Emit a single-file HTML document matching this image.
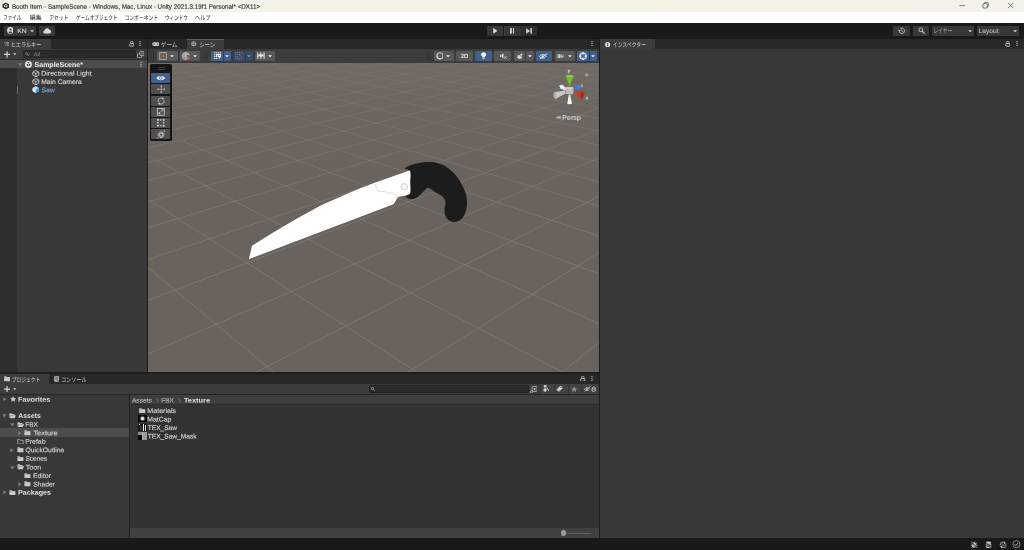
<!DOCTYPE html>
<html lang="ja">
<head>
<meta charset="utf-8">
<title>Booth Item - SampleScene - Unity</title>
<style>
*{box-sizing:border-box;margin:0;padding:0}
html,body{width:1024px;height:550px;overflow:hidden;background:#383838}
body{font-family:"Liberation Sans","Noto Sans CJK JP",sans-serif;font-size:6.4px;color:#d2d2d2;line-height:1}
#root{position:absolute;left:0;top:0;width:1024px;height:550px;will-change:transform;overflow:hidden}
.a{position:absolute}
.t{position:absolute;white-space:nowrap;line-height:1;transform-origin:0 50%}
</style>
</head>
<body>
<div id="root">
<div class="a" style="left:0.00px;top:0.00px;width:1024.00px;height:11.70px;background:linear-gradient(to right,#f3f3ec 0%,#f4f2e8 35%,#f5f2e5 62%,#f3f2e9 85%,#f2f2ec 100%);"></div>
<svg class="a" style="left:1.60px;top:2.00px" width="7.60" height="7.80" viewBox="0 0 16 15"><path d="M8 0.3 L14.9 3.9 V11.1 L8 14.7 L1.1 11.1 V3.9 Z" fill="#2b2b2b"/><path d="M8 3 L10.6 4.4 L8 5.9 L5.4 4.4 Z M4.3 5.6 L7.3 7.3 V10.9 L4.3 9.2 Z M11.7 5.6 V9.2 L8.7 10.9 V7.3 Z" fill="#e8e8e0"/></svg>
<span class="t" style="left:11px;top:3px;font-size:6.5px;color:#2e2e2e;-webkit-text-stroke:0.14px #2e2e2e;transform:translate(0.92px,0.71px) rotate(0.03deg) scaleX(0.9672);">Booth Item - SampleScene - Windows, Mac, Linux - Unity 2021.3.19f1 Personal* &lt;DX11&gt;</span>
<svg class="a" style="left:955.00px;top:0.00px" width="69.00" height="11.00" viewBox="0 0 69 11"><g stroke="#2a2a2a" stroke-width="0.6" fill="none"><path d="M4.3 5.6 H10"/><rect x="27.9" y="3.7" width="4.3" height="4.3" rx="0.9"/><path d="M29.1 3.7 V3.3 Q29.1 2.6 29.8 2.6 H32.6 Q33.3 2.6 33.3 3.3 V6.2 Q33.3 6.9 32.6 6.9 H32.2"/><path d="M53.1 2.9 L58.3 8.1 M58.3 2.9 L53.1 8.1"/></g></svg>
<div class="a" style="left:0.00px;top:11.70px;width:1024.00px;height:11.20px;background:#ffffff;"></div>
<span class="t" style="left:3px;top:14px;font-size:6.3px;color:#262626;transform:translate(0.37px,0.73px) rotate(0.03deg) scaleX(0.7052);">ファイル</span>
<span class="t" style="left:29px;top:14px;font-size:6.3px;color:#262626;transform:translate(0.80px,0.73px) rotate(0.03deg) scaleX(0.9360);">編集</span>
<span class="t" style="left:49px;top:14px;font-size:6.3px;color:#262626;transform:translate(0.23px,0.73px) rotate(0.03deg) scaleX(0.7656);">アセット</span>
<span class="t" style="left:75px;top:14px;font-size:6.3px;color:#262626;transform:translate(0.92px,0.73px) rotate(0.03deg) scaleX(0.7367);">ゲームオブジェクト</span>
<span class="t" style="left:124px;top:14px;font-size:6.3px;color:#262626;transform:translate(0.44px,0.73px) rotate(0.03deg) scaleX(0.7645);">コンポーネント</span>
<span class="t" style="left:164px;top:14px;font-size:6.3px;color:#262626;transform:translate(0.95px,0.73px) rotate(0.03deg) scaleX(0.7300);">ウィンドウ</span>
<span class="t" style="left:194px;top:14px;font-size:6.3px;color:#262626;transform:translate(0.99px,0.73px) rotate(0.03deg) scaleX(0.8216);">ヘルプ</span>
<div class="a" style="left:0.00px;top:22.90px;width:1024.00px;height:16.10px;background:#191919;"></div>
<div class="a" style="left:4.10px;top:26.00px;width:31.80px;height:9.70px;background:#383838;border-radius:1px;"></div>
<svg class="a" style="left:6.50px;top:27.40px" width="6.90" height="6.90" viewBox="0 0 14 14"><circle cx="7" cy="7" r="6.8" fill="#d8d8d8"/><circle cx="7" cy="5.2" r="2.1" fill="#383838"/><path d="M3.2 11.2 C3.8 8.6 10.2 8.6 10.8 11.2 C9.2 13 4.8 13 3.2 11.2Z" fill="#383838"/></svg>
<span class="t" style="left:17px;top:28px;font-size:6.2px;color:#cfcfcf;-webkit-text-stroke:0.14px #cfcfcf;transform:translate(0.26px,0.11px) rotate(0.03deg) scaleX(1.0839);">KN</span>
<svg class="a" style="left:29.90px;top:29.90px" width="4.20" height="2.40" viewBox="0 0 10 6"><path d="M0.3 0.4 H9.7 L5 5.8Z" fill="#d4d4d4"/></svg>
<div class="a" style="left:38.90px;top:26.00px;width:16.60px;height:9.70px;background:#383838;border-radius:1px;"></div>
<svg class="a" style="left:42.70px;top:28.10px" width="8.60" height="5.70" viewBox="0 0 19 13"><path d="M4.6 12.6 C1.6 12.6 0.3 10.6 0.3 9 C0.3 7 1.9 5.7 3.6 5.6 C3.9 2.6 6.3 0.4 9.2 0.4 C11.7 0.4 13.7 2 14.5 4.2 C16.9 4.4 18.7 6.1 18.7 8.4 C18.7 10.8 16.8 12.6 14.4 12.6 Z" fill="#dadada"/></svg>
<div class="a" style="left:486.80px;top:26.00px;width:16.40px;height:9.70px;background:#383838;border-radius:1px 0 0 1px;"></div>
<div class="a" style="left:503.50px;top:26.00px;width:16.50px;height:9.70px;background:#383838;border-radius:0;"></div>
<div class="a" style="left:520.40px;top:26.00px;width:16.60px;height:9.70px;background:#2e2e2e;border-radius:0 1px 1px 0;"></div>
<svg class="a" style="left:492.60px;top:28.10px" width="4.80" height="5.80" viewBox="0 0 10 12"><path d="M0.4 0.2 L9.8 6 L0.4 11.8Z" fill="#dcdcdc"/></svg>
<svg class="a" style="left:509.60px;top:28.10px" width="4.80" height="5.80" viewBox="0 0 10 12"><rect x="0.2" y="0.2" width="3.6" height="11.6" fill="#dcdcdc"/><rect x="6.2" y="0.2" width="3.6" height="11.6" fill="#dcdcdc"/></svg>
<svg class="a" style="left:526.00px;top:28.10px" width="6.20" height="5.80" viewBox="0 0 13 12"><path d="M0.4 0.2 L8.6 6 L0.4 11.8Z" fill="#d0d0d0"/><rect x="9.2" y="0.2" width="3.2" height="11.6" fill="#d0d0d0"/></svg>
<div class="a" style="left:893.30px;top:26.00px;width:16.70px;height:9.70px;background:#383838;border-radius:1px;"></div>
<svg class="a" style="left:897.80px;top:27.00px" width="7.60" height="7.60" viewBox="0 0 14 14"><path d="M2.3 7.2 A4.9 4.9 0 1 0 3.9 3.4" fill="none" stroke="#d0d0d0" stroke-width="1.5"/><path d="M0.3 5.2 L4.6 5.6 L2.3 8.9Z" fill="#d0d0d0"/><path d="M7.2 4.2 V7.4 L9.5 8.7" fill="none" stroke="#d0d0d0" stroke-width="1.3"/></svg>
<div class="a" style="left:913.10px;top:26.00px;width:16.10px;height:9.70px;background:#383838;border-radius:1px;"></div>
<svg class="a" style="left:917.60px;top:27.30px" width="7.20" height="7.20" viewBox="0 0 14 14"><circle cx="5.4" cy="5.4" r="3.7" fill="none" stroke="#d0d0d0" stroke-width="1.7"/><path d="M8.2 8.2 L13 13" stroke="#d0d0d0" stroke-width="2.1"/></svg>
<div class="a" style="left:932.10px;top:26.00px;width:41.90px;height:9.70px;background:#383838;border-radius:1px;"></div>
<span class="t" style="left:933px;top:28px;font-size:6.2px;color:#a8a8a8;transform:translate(0.34px,0.01px) rotate(0.03deg) scaleX(0.7648);">レイヤー</span>
<svg class="a" style="left:967.90px;top:29.90px" width="4.40" height="2.50" viewBox="0 0 10 6"><path d="M0.3 0.4 H9.7 L5 5.8Z" fill="#d4d4d4"/></svg>
<div class="a" style="left:977.00px;top:26.00px;width:42.10px;height:9.70px;background:#383838;border-radius:1px;"></div>
<span class="t" style="left:978px;top:28px;font-size:6.3px;color:#b0b0b0;-webkit-text-stroke:0.14px #b0b0b0;transform:translate(0.46px,0.03px) rotate(0.03deg) scaleX(1.0703);">Layout</span>
<svg class="a" style="left:1012.90px;top:29.90px" width="4.40" height="2.50" viewBox="0 0 10 6"><path d="M0.3 0.4 H9.7 L5 5.8Z" fill="#d4d4d4"/></svg>
<div class="a" style="left:0.00px;top:38.70px;width:147.00px;height:10.00px;background:#282828;"></div>
<div class="a" style="left:0.00px;top:38.70px;width:50.80px;height:10.00px;background:#3c3c3c;"></div>
<svg class="a" style="left:4.30px;top:42.20px" width="5.00" height="3.80" viewBox="0 0 10 8"><g stroke="#c0c0c0" stroke-width="1.5"><path d="M0 1H2.2M3.4 1H10M2.6 4H4.8M6 4H10M2.6 7H4.8M6 7H10"/></g></svg>
<span class="t" style="left:10px;top:41px;font-size:6.2px;color:#d0d0d0;transform:translate(0.67px,0.76px) rotate(0.03deg) scaleX(0.8254);">ヒエラルキー</span>
<svg class="a" style="left:128.60px;top:41.20px" width="5.40" height="5.60" viewBox="0 0 11 12"><rect x="1.1" y="5.5" width="8.8" height="5.6" rx="1.6" fill="none" stroke="#cacaca" stroke-width="2"/><path d="M2.5 3.9 Q2.5 0.9 5.5 0.9 Q8.6 0.9 8.6 3.8 V5.4" fill="none" stroke="#cacaca" stroke-width="1.7"/></svg>
<svg class="a" style="left:139.30px;top:41.00px" width="1.90" height="5.40" viewBox="0 0 4 12"><g fill="#c6c6c6"><rect x="0.8" y="0.2" width="2.6" height="2.6"/><rect x="0.8" y="4.7" width="2.6" height="2.6"/><rect x="0.8" y="9.2" width="2.6" height="2.6"/></g></svg>
<div class="a" style="left:0.00px;top:48.70px;width:147.00px;height:10.60px;background:#3c3c3c;"></div>
<div class="a" style="left:0.00px;top:59.20px;width:147.00px;height:0.80px;background:#2a2a2a;"></div>
<svg class="a" style="left:3.90px;top:51.00px" width="6.20" height="6.80" viewBox="0 0 12 13"><path d="M6 0.2V12.8M0.2 6.5H11.8" stroke="#dcdcdc" stroke-width="2.1"/></svg>
<svg class="a" style="left:12.70px;top:53.40px" width="3.60" height="2.30" viewBox="0 0 10 6"><path d="M0.3 0.4 H9.7 L5 5.8Z" fill="#cfcfcf"/></svg>
<div class="a" style="left:23.30px;top:50.20px;width:113.20px;height:8.20px;background:#2a2a2a;border:0.6px solid #242424;border-radius:1.6px;"></div>
<svg class="a" style="left:25.00px;top:52.00px" width="5.40" height="5.00" viewBox="0 0 11 10"><circle cx="3.6" cy="3.6" r="2.5" fill="none" stroke="#858585" stroke-width="1.5"/><path d="M5.4 5.4 L8.4 8.4" stroke="#858585" stroke-width="1.7"/><path d="M7.6 3.2 H10.8 L9.2 5.2Z" fill="#858585"/></svg>
<span class="t" style="left:33px;top:52px;font-size:5.6px;color:#767676;-webkit-text-stroke:0.14px #767676;transform:translate(0.40px,0.23px) rotate(0.03deg) scaleX(1.1000);">All</span>
<svg class="a" style="left:136.90px;top:51.00px" width="7.60" height="7.40" viewBox="0 0 15 15"><rect x="0.9" y="5.4" width="8.4" height="8.4" rx="2" fill="none" stroke="#c4c4c4" stroke-width="1.5"/><rect x="5.4" y="0.9" width="8.6" height="8.6" rx="2.2" fill="#3c3c3c" stroke="#c4c4c4" stroke-width="1.5"/><path d="M9.7 3 V6.6 M8 5.2 L9.7 7 L11.4 5.2" fill="none" stroke="#c4c4c4" stroke-width="1.2"/></svg>
<div class="a" style="left:0.00px;top:60.00px;width:147.00px;height:312.00px;background:#383838;"></div>
<div class="a" style="left:0.00px;top:60.00px;width:16.90px;height:312.00px;background:#2d2d2d;"></div>
<div class="a" style="left:0.00px;top:59.95px;width:147.00px;height:7.80px;background:#4d4d4d;"></div>
<svg class="a" style="left:17.90px;top:63.00px" width="4.50" height="3.60" viewBox="0 0 10 8"><path d="M0.2 0.4 H9.8 L5 7.8Z" fill="#7c7c7c"/></svg>
<svg class="a" style="left:25.30px;top:60.90px" width="6.90" height="6.90" viewBox="0 0 14 14"><circle cx="7" cy="7" r="6.9" fill="#f0f0f0"/><path d="M7 2.2 L9.6 3.7 L7 5.2 L4.4 3.7Z M3.4 5.3 L6.3 7 V10.6 L3.4 8.9Z M10.6 5.3 V8.9 L7.7 10.6 V7Z" fill="#2c2c2c"/></svg>
<span class="t" style="left:34px;top:62px;font-size:6.9px;color:#ececec;font-weight:bold;transform:translate(0.55px,0.05px) rotate(0.03deg) scaleX(1.0180);">SampleScene*</span>
<svg class="a" style="left:139.90px;top:62.00px" width="1.90" height="5.40" viewBox="0 0 4 12"><g fill="#c6c6c6"><rect x="0.8" y="0.2" width="2.6" height="2.6"/><rect x="0.8" y="4.7" width="2.6" height="2.6"/><rect x="0.8" y="9.2" width="2.6" height="2.6"/></g></svg>
<svg class="a" style="left:32.10px;top:69.60px" width="7.70" height="7.30" viewBox="0 0 16 16"><path d="M8 1 L14 4.2 Q14.6 4.6 14.6 5.2 V10.8 Q14.6 11.4 14 11.8 L8 15 L2 11.8 Q1.4 11.4 1.4 10.8 V5.2 Q1.4 4.6 2 4.2 Z" fill="none" stroke="#cfcfcf" stroke-width="2"/><path d="M2 4.8 L8 8 L14 4.8 M8 8 V14.6" fill="none" stroke="#cfcfcf" stroke-width="2"/></svg>
<span class="t" style="left:41px;top:70px;font-size:6.7px;color:#d4d4d4;-webkit-text-stroke:0.14px #d4d4d4;transform:translate(0.17px,0.60px) rotate(0.03deg) scaleX(1.0547);">Directional Light</span>
<svg class="a" style="left:32.10px;top:78.00px" width="7.70" height="7.30" viewBox="0 0 16 16"><path d="M8 1 L14 4.2 Q14.6 4.6 14.6 5.2 V10.8 Q14.6 11.4 14 11.8 L8 15 L2 11.8 Q1.4 11.4 1.4 10.8 V5.2 Q1.4 4.6 2 4.2 Z" fill="none" stroke="#cfcfcf" stroke-width="2"/><path d="M2 4.8 L8 8 L14 4.8 M8 8 V14.6" fill="none" stroke="#cfcfcf" stroke-width="2"/></svg>
<span class="t" style="left:41px;top:79px;font-size:6.7px;color:#d4d4d4;-webkit-text-stroke:0.14px #d4d4d4;transform:translate(0.19px,0.10px) rotate(0.03deg) scaleX(1.0113);">Main Camera</span>
<div class="a" style="left:16.90px;top:85.70px;width:1.20px;height:8.40px;background:#2f80c6;"></div>
<svg class="a" style="left:32.20px;top:86.40px" width="7.50" height="7.30" viewBox="0 0 16 16"><path d="M8 0.6 L14.8 4.4 V11.6 L8 15.4 L1.2 11.6 V4.4 Z" fill="#6fb1ea"/><path d="M8 0.6 L14.8 4.4 L8 8.2 L1.2 4.4Z" fill="#bfdcf5"/><path d="M8 8.2 V15.4 L1.2 11.6 V4.4Z" fill="#eef6fc"/><path d="M8 8.2 V15.4 L14.8 11.6 V4.4Z" fill="#4f96d8"/></svg>
<span class="t" style="left:41px;top:87px;font-size:6.7px;color:#7ba1d4;-webkit-text-stroke:0.14px #7ba1d4;transform:translate(0.44px,0.15px) rotate(0.03deg) scaleX(1.0275);">Saw</span>
<div class="a" style="left:146.90px;top:38.70px;width:1.60px;height:334.00px;background:#1d1d1d;"></div>
<div class="a" style="left:148.30px;top:38.70px;width:450.60px;height:10.00px;background:#282828;"></div>
<svg class="a" style="left:151.80px;top:42.30px" width="7.70" height="4.20" viewBox="0 0 16 9"><rect x="0.2" y="0.4" width="15.6" height="8.2" rx="4.1" fill="#cdcdcd"/><circle cx="4.5" cy="4.5" r="1.35" fill="#282828"/><circle cx="11.5" cy="4.5" r="1.35" fill="#282828"/></svg>
<span class="t" style="left:160px;top:41px;font-size:6.2px;color:#cacaca;transform:translate(0.77px,0.76px) rotate(0.03deg) scaleX(0.9070);">ゲーム</span>
<div class="a" style="left:187.00px;top:38.70px;width:37.00px;height:10.00px;background:#3c3c3c;"></div>
<div class="a" style="left:187.00px;top:38.60px;width:37.00px;height:1.00px;background:#2f6cab;"></div>
<svg class="a" style="left:191.00px;top:41.40px" width="5.50" height="5.30" viewBox="0 0 12 12"><circle cx="6" cy="6" r="5.7" fill="#c4c4c4"/><path d="M0.4 4.1H11.6M0.4 7.9H11.6M4.1 0.4V11.6M7.9 0.4V11.6" stroke="#3c3c3c" stroke-width="1"/></svg>
<span class="t" style="left:199px;top:41px;font-size:6.2px;color:#d0d0d0;transform:translate(0.13px,0.91px) rotate(0.03deg) scaleX(0.8882);">シーン</span>
<svg class="a" style="left:590.90px;top:41.00px" width="1.90" height="5.40" viewBox="0 0 4 12"><g fill="#c6c6c6"><rect x="0.8" y="0.2" width="2.6" height="2.6"/><rect x="0.8" y="4.7" width="2.6" height="2.6"/><rect x="0.8" y="9.2" width="2.6" height="2.6"/></g></svg>
<div class="a" style="left:148.30px;top:48.70px;width:450.60px;height:13.90px;background:#3c3c3c;"></div>
<div class="a" style="left:151.20px;top:51.60px;width:0.70px;height:8.60px;background:#343434;"></div>
<div class="a" style="left:153.10px;top:51.60px;width:0.70px;height:8.60px;background:#343434;"></div>
<div class="a" style="left:157.40px;top:50.70px;width:20.40px;height:10.30px;background:#585858;border-radius:1.2px;"></div>
<svg class="a" style="left:159.40px;top:51.80px" width="7.90" height="8.10" viewBox="0 0 16 16"><rect x="0.8" y="0.8" width="14.4" height="14.4" rx="1" fill="#6a6a6a" stroke="#bdbdbd" stroke-width="1.4"/><rect x="4" y="4" width="8" height="8" fill="#6f5850"/><circle cx="8" cy="8" r="2.5" fill="#d4532c"/></svg>
<svg class="a" style="left:170.35px;top:54.90px" width="4.00" height="2.60" viewBox="0 0 10 6"><path d="M0.3 0.4 H9.7 L5 5.8Z" fill="#f0f0f0"/></svg>
<div class="a" style="left:179.80px;top:50.70px;width:20.00px;height:10.30px;background:#585858;border-radius:1.2px;"></div>
<svg class="a" style="left:181.90px;top:51.80px" width="8.20" height="8.20" viewBox="0 0 16 16"><circle cx="7.6" cy="8" r="7" fill="#8a8a8a" stroke="#d0d0d0" stroke-width="1.3"/><path d="M7.6 1 V15 M0.8 8 H8.4 M2.4 3.8 Q7.6 6 12.6 3.8" stroke="#d8d8d8" stroke-width="1.1" fill="none"/><path d="M8.6 6.4 H14.8 V15.4 H8.6Z" fill="#585858"/><path d="M9.6 7 V14.6" stroke="#e0e0e0" stroke-width="1.4"/><circle cx="12.6" cy="12.2" r="2.5" fill="#e8552a"/></svg>
<svg class="a" style="left:193.05px;top:54.90px" width="4.00" height="2.60" viewBox="0 0 10 6"><path d="M0.3 0.4 H9.7 L5 5.8Z" fill="#f0f0f0"/></svg>
<div class="a" style="left:205.20px;top:51.60px;width:0.70px;height:8.60px;background:#343434;"></div>
<div class="a" style="left:207.10px;top:51.60px;width:0.70px;height:8.60px;background:#343434;"></div>
<div class="a" style="left:211.40px;top:50.70px;width:11.50px;height:10.30px;background:#41618c;border-radius:1.2px 0 0 1.2px;"></div>
<div class="a" style="left:223.70px;top:50.70px;width:7.30px;height:10.30px;background:#41618c;border-radius:0 1.2px 1.2px 0;"></div>
<svg class="a" style="left:213.60px;top:52.30px" width="7.20" height="7.20" viewBox="0 0 16 16"><g fill="#f4f4f4"><rect x="0.4" y="0.4" width="2.6" height="2.6"/><rect x="4.6" y="0.4" width="2.6" height="2.6"/><rect x="8.8" y="0.4" width="2.6" height="2.6"/><rect x="13" y="0.4" width="2.6" height="2.6"/><rect x="0.4" y="4.6" width="2.6" height="2.6"/><rect x="0.4" y="8.8" width="2.6" height="2.6"/><rect x="0.4" y="13" width="2.6" height="2.6"/><rect x="4.6" y="13" width="2.6" height="2.6"/><rect x="4.4" y="4.6" width="11.2" height="2.2"/><rect x="4.6" y="4.6" width="2.4" height="7"/><rect x="8.8" y="4.6" width="2.2" height="5"/><rect x="13.2" y="4.6" width="2.2" height="5"/><path d="M8 9 H16 L12 15.8Z"/></g></svg>
<svg class="a" style="left:225.45px;top:54.90px" width="4.00" height="2.60" viewBox="0 0 10 6"><path d="M0.3 0.4 H9.7 L5 5.8Z" fill="#f0f0f0"/></svg>
<div class="a" style="left:233.50px;top:50.70px;width:11.00px;height:10.30px;background:#364a6a;border-radius:1.2px 0 0 1.2px;"></div>
<div class="a" style="left:245.50px;top:50.70px;width:7.30px;height:10.30px;background:#364a6a;border-radius:0 1.2px 1.2px 0;"></div>
<svg class="a" style="left:235.40px;top:52.20px" width="7.80" height="7.60" viewBox="0 0 16 16"><g fill="#929cab"><rect x="0.6" y="0.6" width="1.8" height="1.8"/><rect x="4.6" y="0.6" width="1.8" height="1.8"/><rect x="8.6" y="0.6" width="1.8" height="1.8"/><rect x="12.6" y="0.6" width="1.8" height="1.8"/><rect x="0.6" y="4.6" width="1.8" height="1.8"/><rect x="4.6" y="4.6" width="1.8" height="1.8"/><rect x="8.6" y="4.6" width="1.8" height="1.8"/><rect x="0.6" y="8.6" width="1.8" height="1.8"/><rect x="4.6" y="8.6" width="1.8" height="1.8"/><rect x="0.6" y="12.6" width="1.8" height="1.8"/><rect x="4.6" y="12.6" width="1.8" height="1.8"/></g><path d="M8.4 8 A3.6 3.6 0 1 1 9.4 14.6" fill="none" stroke="#c2523a" stroke-width="1.8"/><path d="M7 13 L10.6 12.6 L9.6 16Z" fill="#c2523a"/></svg>
<svg class="a" style="left:247.05px;top:54.90px" width="4.00" height="2.60" viewBox="0 0 10 6"><path d="M0.3 0.4 H9.7 L5 5.8Z" fill="#8e98a6"/></svg>
<div class="a" style="left:255.30px;top:50.70px;width:19.50px;height:10.30px;background:#585858;border-radius:1.2px;"></div>
<svg class="a" style="left:256.80px;top:52.40px" width="7.80" height="7.20" viewBox="0 0 16 14"><g fill="#e6e6e6"><rect x="0.4" y="0.4" width="2.2" height="13.2"/><rect x="13.4" y="0.4" width="2.2" height="13.2"/><rect x="6.9" y="0.4" width="2.2" height="13.2"/><path d="M2.6 4.4 H13.4 V9.6 H2.6Z"/></g><path d="M3.6 10.2 L5.2 7.4 L6.4 10.2Z M9.8 10.2 L11 7.4 L12.6 10.2Z" fill="#585858"/></svg>
<svg class="a" style="left:268.05px;top:54.90px" width="4.00" height="2.60" viewBox="0 0 10 6"><path d="M0.3 0.4 H9.7 L5 5.8Z" fill="#f0f0f0"/></svg>
<div class="a" style="left:427.20px;top:51.60px;width:0.70px;height:8.60px;background:#343434;"></div>
<div class="a" style="left:429.10px;top:51.60px;width:0.70px;height:8.60px;background:#343434;"></div>
<div class="a" style="left:433.70px;top:50.70px;width:20.40px;height:10.30px;background:#585858;border-radius:1.2px;"></div>
<svg class="a" style="left:435.60px;top:52.10px" width="7.80" height="7.80" viewBox="0 0 16 16"><circle cx="8" cy="8" r="6.5" fill="none" stroke="#e6e6e6" stroke-width="1.7"/><path d="M2.2 6.4 A6 6 0 0 0 13.4 10.8 A5.4 5.4 0 0 1 4.6 4 A6 6 0 0 0 2.2 6.4Z" fill="#e6e6e6"/></svg>
<svg class="a" style="left:446.45px;top:54.90px" width="4.00" height="2.60" viewBox="0 0 10 6"><path d="M0.3 0.4 H9.7 L5 5.8Z" fill="#f0f0f0"/></svg>
<div class="a" style="left:455.90px;top:50.70px;width:17.10px;height:10.30px;background:#585858;border-radius:1.2px;"></div>
<span class="t" style="left:460px;top:54px;font-size:5.7px;color:#ececec;-webkit-text-stroke:0.14px #ececec;transform:translate(0.74px,0.11px) rotate(0.03deg) scaleX(1.0286);">2D</span>
<div class="a" style="left:475.00px;top:50.70px;width:17.10px;height:10.30px;background:#41618c;border-radius:1.2px;"></div>
<svg class="a" style="left:481.00px;top:52.40px" width="5.20" height="7.20" viewBox="0 0 10 14"><path d="M5 0.3 A4.6 4.6 0 0 1 7.6 8.8 V10.4 H2.4 V8.8 A4.6 4.6 0 0 1 5 0.3Z" fill="#f6f6f6"/><rect x="2.8" y="11" width="4.4" height="1.3" fill="#f6f6f6"/><rect x="3.4" y="12.8" width="3.2" height="1" fill="#f6f6f6"/></svg>
<div class="a" style="left:494.40px;top:50.70px;width:16.80px;height:10.30px;background:#585858;border-radius:1.2px;"></div>
<svg class="a" style="left:499.60px;top:52.80px" width="7.40" height="6.40" viewBox="0 0 15 13"><g fill="#e4e4e4"><rect x="0.4" y="3.6" width="2.2" height="4.4"/><path d="M3.4 3.4 L7 0.4 V11 L3.4 8.2Z"/><path d="M8.4 6.6 L9.6 6.6 L11.2 8.6 L12.8 6.6 L14 6.6 L11.9 9.4 L14.2 12.4 L13 12.4 L11.2 10.2 L9.4 12.4 L8.2 12.4 L10.5 9.4Z"/></g></svg>
<div class="a" style="left:513.50px;top:50.70px;width:11.70px;height:10.30px;background:#585858;border-radius:1.2px 0 0 1.2px;"></div>
<div class="a" style="left:526.00px;top:50.70px;width:7.60px;height:10.30px;background:#585858;border-radius:0 1.2px 1.2px 0;"></div>
<svg class="a" style="left:515.60px;top:52.60px" width="7.60" height="6.80" viewBox="0 0 16 14"><g fill="#dedede"><path d="M1 9.4 L6.6 6.6 L14 9.4 L8 12.6Z"/><path d="M1.6 6.4 L6.6 3.8 L12.6 6.2 L7.6 8.8Z"/><path d="M11.4 0.2 L12.2 2.2 L14.4 2.4 L12.8 3.8 L13.2 5.8 L11.4 4.8 L9.6 5.8 L10 3.8 L8.4 2.4 L10.6 2.2Z"/></g></svg>
<svg class="a" style="left:527.75px;top:54.90px" width="4.00" height="2.60" viewBox="0 0 10 6"><path d="M0.3 0.4 H9.7 L5 5.8Z" fill="#f0f0f0"/></svg>
<div class="a" style="left:535.50px;top:50.70px;width:16.70px;height:10.30px;background:#41618c;border-radius:1.2px;"></div>
<svg class="a" style="left:539.40px;top:52.80px" width="9.00" height="6.60" viewBox="0 0 18 13"><path d="M1 6.6 C3.8 1.8 11 1.8 14 6.6 C11 11.4 3.8 11.4 1 6.6Z" fill="none" stroke="#f2f2f2" stroke-width="1.7"/><circle cx="7.5" cy="6.6" r="2.1" fill="#f2f2f2"/><path d="M1.6 12.2 L16.6 1" stroke="#f2f2f2" stroke-width="1.9"/></svg>
<div class="a" style="left:554.60px;top:50.70px;width:20.40px;height:10.30px;background:#585858;border-radius:1.2px;"></div>
<svg class="a" style="left:557.20px;top:53.60px" width="7.00" height="4.80" viewBox="0 0 14 11"><g fill="#dedede"><rect x="0.3" y="0.6" width="2.6" height="9.8"/><rect x="3.8" y="0.6" width="2.6" height="9.8"/><rect x="7.3" y="0.6" width="2.4" height="9.8"/><path d="M10.2 5.5 L13.7 1.4 V9.6Z"/></g></svg>
<svg class="a" style="left:567.65px;top:54.90px" width="4.00" height="2.60" viewBox="0 0 10 6"><path d="M0.3 0.4 H9.7 L5 5.8Z" fill="#f0f0f0"/></svg>
<div class="a" style="left:577.20px;top:50.70px;width:11.40px;height:10.30px;background:#41618c;border-radius:1.2px 0 0 1.2px;"></div>
<div class="a" style="left:589.50px;top:50.70px;width:7.60px;height:10.30px;background:#41618c;border-radius:0 1.2px 1.2px 0;"></div>
<svg class="a" style="left:578.80px;top:51.80px" width="8.20" height="8.20" viewBox="0 0 16 16"><circle cx="8" cy="8" r="6" fill="none" stroke="#f2f2f2" stroke-width="2"/><path d="M8 0.2 V5.2 M8 10.8 V15.8 M0.2 8 H5.2 M10.8 8 H15.8" stroke="#f2f2f2" stroke-width="2.1"/></svg>
<svg class="a" style="left:591.25px;top:54.90px" width="4.00" height="2.60" viewBox="0 0 10 6"><path d="M0.3 0.4 H9.7 L5 5.8Z" fill="#f0f0f0"/></svg>
<div class="a" style="left:148.3px;top:62.5px;width:450.6px;height:309.3px;background:#6a635d;overflow:hidden">
<svg class="a" style="left:0;top:0" width="450.6" height="309.3" viewBox="148.3 62.5 450.6 309.3">
<defs><linearGradient id="fog" x1="0" y1="0" x2="0" y2="1"><stop offset="0" stop-color="#746d67" stop-opacity="0.8"/><stop offset="0.1" stop-color="#716a64" stop-opacity="0.62"/><stop offset="0.25" stop-color="#6e6761" stop-opacity="0.38"/><stop offset="0.45" stop-color="#6b645e" stop-opacity="0.12"/><stop offset="0.6" stop-color="#6a635d" stop-opacity="0"/></linearGradient></defs>
<path d="M181.3 62.5L148.3 66.9 M215.0 62.5L148.3 71.6 M249.0 62.5L148.3 76.9 M283.5 62.5L148.3 82.6 M318.5 62.5L148.3 89.0 M353.9 62.5L148.3 96.0 M389.7 62.5L148.3 103.8 M426.0 62.5L148.3 112.6 M462.8 62.5L148.3 122.6 M500.0 62.5L148.3 133.9 M537.8 62.5L148.3 147.0 M576.1 62.5L148.3 162.1 M598.9 66.5L148.3 179.9 M598.9 77.6L148.3 201.2 M598.9 91.2L148.3 227.0 M598.9 107.9L148.3 259.1 M598.9 129.2L148.3 299.8 M598.9 157.3L148.3 353.4 M598.9 195.9L256.0 371.8 M598.9 252.2L408.1 371.8 M598.9 342.2L562.4 371.8 M589.1 62.5L598.9 63.7 M546.1 62.5L598.9 69.1 M503.8 62.5L598.9 75.2 M462.1 62.5L598.9 81.9 M421.0 62.5L598.9 89.3 M380.4 62.5L598.9 97.7 M340.5 62.5L598.9 107.1 M301.1 62.5L598.9 117.9 M262.3 62.5L598.9 130.2 M224.0 62.5L598.9 144.5 M186.3 62.5L598.9 161.3 M149.0 62.5L598.9 181.3 M148.3 73.1L598.9 205.5 M148.3 86.4L598.9 235.4 M148.3 103.2L598.9 273.3 M148.3 125.3L598.9 322.9 M148.3 155.4L563.1 371.8 M148.3 198.8L417.7 371.8 M148.3 267.1L274.3 371.8" stroke="#8b847d" stroke-width="0.6" fill="none"/>
<rect x="148.3" y="62.5" width="450.6" height="309.3" fill="url(#fog)"/>
<path d="M249.2 258.7 L252.3 245.2 L272.7 232.4 L297.3 218 L321.9 204.6 L346.4 193.7 L360 188 L375 182.2 L408.4 170.4 L411.5 169.8 L411.6 192.6 L406 195 L398.2 196.6 L394 203.7 Z" fill="#ffffff"/>
<path d="M250 258.9 L394 204.2" stroke="#6a635d" stroke-width="0.9" stroke-dasharray="0.9 0.9" fill="none"/>
<path d="M375.4 183.6 L378.4 190.6 L386.4 191.4 L387.6 192.8 L392.6 192.4 L398.2 196.4" fill="none" stroke="#bdbdbd" stroke-width="0.5"/>
<circle cx="404.7" cy="186.2" r="3.2" fill="#f6f6f6" stroke="#b8b8b8" stroke-width="0.6"/>
<path d="M405.4 168.2 C405.2 167.3 407.4 166.2 409.5 165.3 C411.6 164.4 414.8 163.4 418.2 162.8 C421.6 162.2 426.4 161.6 429.8 161.6 C433.2 161.6 435.6 162.0 438.5 162.8 C441.4 163.7 444.4 164.7 447.3 166.7 C450.2 168.7 453.6 171.9 456.0 174.7 C458.4 177.5 460.1 180.3 461.8 183.5 C463.5 186.7 465.3 190.2 466.2 193.6 C467.1 197.0 467.4 200.7 467.3 203.8 C467.2 207.0 466.4 210.1 465.5 212.5 C464.6 214.9 463.4 216.9 461.8 218.4 C460.2 219.9 457.9 221.0 456.0 221.3 C454.1 221.7 451.9 221.5 450.2 220.5 C448.5 219.5 446.7 217.6 445.8 215.5 C444.9 213.4 444.8 210.6 444.8 208.2 C444.8 205.8 446.4 203.1 445.8 200.9 C445.2 198.7 443.4 196.8 441.5 195.1 C439.6 193.4 436.3 192.0 434.2 190.7 C432.1 189.4 430.1 187.5 428.6 187.3 C427.1 187.1 426.6 188.4 425.3 189.5 C424.1 190.6 422.5 192.3 421.1 193.6 C419.7 194.9 418.4 196.5 416.7 197.3 C415.0 198.2 412.7 198.9 410.9 198.7 C409.1 198.4 405.9 196.7 405.8 195.8 C405.7 194.9 409.6 195.5 410.4 193.2 C411.2 190.9 410.6 185.8 410.6 182.0 C410.6 178.2 411.3 172.9 410.4 170.6 C409.5 168.3 405.5 169.1 405.4 168.2Z" fill="#1c1c1c"/>
</svg>
</div>
<div class="a" style="left:149.90px;top:63.90px;width:21.70px;height:77.30px;background:#151515;border-radius:1.6px;"></div>
<div class="a" style="left:157.80px;top:66.70px;width:7.40px;height:0.70px;background:#3b3b3b;"></div>
<div class="a" style="left:157.80px;top:68.50px;width:7.40px;height:0.70px;background:#3b3b3b;"></div>
<div class="a" style="left:151.40px;top:73.10px;width:19.00px;height:9.90px;background:#41618c;border-radius:1px;"></div>
<div class="a" style="left:151.40px;top:84.40px;width:19.00px;height:9.90px;background:#4f4f4f;border-radius:1px;"></div>
<div class="a" style="left:151.40px;top:95.80px;width:19.00px;height:9.90px;background:#4f4f4f;border-radius:1px;"></div>
<div class="a" style="left:151.40px;top:107.10px;width:19.00px;height:9.90px;background:#4f4f4f;border-radius:1px;"></div>
<div class="a" style="left:151.40px;top:118.30px;width:19.00px;height:9.90px;background:#4f4f4f;border-radius:1px;"></div>
<div class="a" style="left:151.40px;top:129.30px;width:19.00px;height:9.90px;background:#4f4f4f;border-radius:1px;"></div>
<svg class="a" style="left:156.20px;top:75.00px" width="9.60" height="6.20" viewBox="0 0 18 12"><path d="M0.6 6 C4 0.4 14 0.4 17.4 6 C14 11.6 4 11.6 0.6 6Z" fill="#ffffff"/><circle cx="9" cy="6" r="3.4" fill="#41618c"/><circle cx="9" cy="6" r="1.7" fill="#ffffff"/></svg>
<svg class="a" style="left:156.70px;top:85.30px" width="8.40" height="8.40" viewBox="0 0 16 16"><g fill="#d6d6d6"><path d="M8 0.2 L10.2 3 H5.8Z M8 15.8 L10.2 13 H5.8Z M0.2 8 L3 5.8 V10.2Z M15.8 8 L13 5.8 V10.2Z"/><circle cx="8" cy="8" r="1.5"/><rect x="7.4" y="3.6" width="1.2" height="2"/><rect x="7.4" y="10.4" width="1.2" height="2"/><rect x="3.6" y="7.4" width="2" height="1.2"/><rect x="10.4" y="7.4" width="2" height="1.2"/></g></svg>
<svg class="a" style="left:156.80px;top:96.70px" width="8.20" height="8.20" viewBox="0 0 16 16"><path d="M2.2 9.6 A6 6 0 0 1 11.6 3.2" fill="none" stroke="#d6d6d6" stroke-width="1.5"/><path d="M13.8 6.4 A6 6 0 0 1 4.4 12.8" fill="none" stroke="#d6d6d6" stroke-width="1.5"/><path d="M10 0.6 L13.8 3.2 L10.4 5.6Z M6 15.4 L2.2 12.8 L5.6 10.4Z" fill="#d6d6d6"/></svg>
<svg class="a" style="left:157.20px;top:108.30px" width="7.60" height="7.60" viewBox="0 0 16 16"><rect x="0.8" y="0.8" width="14.4" height="14.4" fill="none" stroke="#d6d6d6" stroke-width="1.5"/><rect x="3.4" y="9" width="3.6" height="3.6" fill="#d6d6d6"/><path d="M7.6 8.4 L12 4 M8.6 3.6 H12.4 V7.4" fill="none" stroke="#d6d6d6" stroke-width="1.4"/></svg>
<svg class="a" style="left:157.20px;top:119.40px" width="7.60" height="7.60" viewBox="0 0 16 16"><rect x="2" y="2" width="12" height="12" fill="none" stroke="#d6d6d6" stroke-width="1" stroke-dasharray="1.4 1.2"/><g fill="#d6d6d6"><rect x="0.2" y="0.2" width="3.4" height="3.4"/><rect x="12.4" y="0.2" width="3.4" height="3.4"/><rect x="0.2" y="12.4" width="3.4" height="3.4"/><rect x="12.4" y="12.4" width="3.4" height="3.4"/><rect x="6.6" y="0.6" width="2.6" height="2.6"/><rect x="6.6" y="12.8" width="2.6" height="2.6"/><rect x="0.6" y="6.6" width="2.6" height="2.6"/><rect x="12.8" y="6.6" width="2.6" height="2.6"/></g></svg>
<svg class="a" style="left:156.60px;top:130.10px" width="8.80" height="8.60" viewBox="0 0 16 16"><ellipse cx="7.4" cy="8.8" rx="2.8" ry="5.6" fill="none" stroke="#d6d6d6" stroke-width="1.2"/><ellipse cx="7.4" cy="8.8" rx="5.6" ry="2.8" fill="none" stroke="#d6d6d6" stroke-width="1.2"/><circle cx="7.4" cy="8.8" r="5.4" fill="none" stroke="#d6d6d6" stroke-width="1" stroke-dasharray="1.6 1.4"/><path d="M11.4 4.8 L15 1.2 M12.6 1 H15.2 V3.6" stroke="#d6d6d6" stroke-width="1.1" fill="none"/><rect x="0.8" y="13.6" width="1.8" height="1.8" fill="#d6d6d6"/></svg>
<svg class="a" style="left:548.00px;top:66.00px" width="46.00" height="58.00" viewBox="548 66 46 58">
<path d="M554.3 92.3 L555.4 99 L565.6 93.6 L565 90.6Z" fill="#c9c9c9"/><ellipse cx="555" cy="95.6" rx="1.5" ry="3.5" fill="#aeaeae" transform="rotate(-8 555 95.6)"/>
<path d="M566.6 88.2 L562.3 84.8 L560.1 88.4 L565.6 90.6Z" fill="#ececec"/><ellipse cx="561.2" cy="86.6" rx="1.25" ry="2.1" transform="rotate(-58 561.2 86.6)" fill="#f8f8f8"/>
<path d="M567.3 103.6 L571.9 103.6 L570.2 94.8 L568.8 94.8Z" fill="#f2f2f2"/><ellipse cx="569.6" cy="103.4" rx="2.3" ry="0.8" fill="#ffffff"/>
<rect x="565.6" y="87" width="7.9" height="7.2" rx="1.8" fill="#bababa"/><path d="M565.8 88.4 Q566 87 567.4 87 H571.8 Q573.2 87 573.4 88.4 L569.6 90.2Z" fill="#cbcbcb"/>
<path d="M565.9 76.2 L573.5 76.2 L569.6 86.4Z" fill="#6ac22a"/><ellipse cx="569.7" cy="76.1" rx="3.8" ry="0.9" fill="#94e052"/>
<path d="M573.6 90.2 L576.4 85.4 L580.4 88.6Z" fill="#3676d8"/><ellipse cx="578.4" cy="87" rx="2.3" ry="1.9" transform="rotate(-30 578.4 87)" fill="#3f82e6"/>
<path d="M573.8 92 L582 91.2 L584.6 94.4 L581.4 99.6Z" fill="#c53a28"/><path d="M582 91.2 L584.6 94.4 L581.4 99.6 L580.2 95.4Z" fill="#9e2a1c"/>
<path d="M585.2 74 H588.3 M585.2 75.6 H588.3" stroke="#cfcfcf" stroke-width="0.75"/>
<path d="M561.2 115.9 L556.6 117.5 L561.2 119.1 M556.6 117.5 H561.4" stroke="#d4d4d4" stroke-width="0.6" fill="none"/>
</svg>
<span class="t" style="left:567px;top:69px;font-size:4.8px;color:#e2e2e2;-webkit-text-stroke:0.14px #e2e2e2;transform:translate(0.70px,0.23px) rotate(0.03deg) scaleX(1.0400);">y</span>
<span class="t" style="left:580px;top:83px;font-size:4.8px;color:#e2e2e2;-webkit-text-stroke:0.14px #e2e2e2;transform:translate(0.80px,0.93px) rotate(0.03deg) scaleX(0.8889);">z</span>
<span class="t" style="left:585px;top:96px;font-size:4.8px;color:#e2e2e2;-webkit-text-stroke:0.14px #e2e2e2;transform:translate(0.60px,0.43px) rotate(0.03deg) scaleX(1.1111);">x</span>
<span class="t" style="left:562px;top:114px;font-size:6.3px;color:#d6d6d6;-webkit-text-stroke:0.14px #d6d6d6;transform:translate(0.34px,0.63px) rotate(0.03deg) scaleX(1.1238);">Persp</span>
<div class="a" style="left:148.30px;top:371.80px;width:451.00px;height:2.10px;background:#1d1d1d;"></div>
<div class="a" style="left:598.90px;top:38.70px;width:1.20px;height:499.40px;background:#1d1d1d;"></div>
<div class="a" style="left:600.10px;top:38.70px;width:423.90px;height:10.00px;background:#282828;"></div>
<div class="a" style="left:600.10px;top:38.70px;width:55.10px;height:10.00px;background:#3c3c3c;"></div>
<svg class="a" style="left:604.90px;top:41.60px" width="5.30" height="5.30" viewBox="0 0 12 12"><circle cx="6" cy="6" r="5.9" fill="#dedede"/><rect x="4.9" y="5" width="2.2" height="4.6" fill="#3c3c3c"/><rect x="4.9" y="2.2" width="2.2" height="1.9" fill="#3c3c3c"/></svg>
<span class="t" style="left:612px;top:42px;font-size:6.2px;color:#d0d0d0;transform:translate(0.81px,0.01px) rotate(0.03deg) scaleX(0.7807);">インスペクター</span>
<svg class="a" style="left:1005.00px;top:41.20px" width="5.40" height="5.60" viewBox="0 0 11 12"><rect x="1.1" y="5.5" width="8.8" height="5.6" rx="1.6" fill="none" stroke="#cacaca" stroke-width="2"/><path d="M2.5 3.9 Q2.5 0.9 5.5 0.9 Q8.6 0.9 8.6 3.8 V5.4" fill="none" stroke="#cacaca" stroke-width="1.7"/></svg>
<svg class="a" style="left:1015.90px;top:41.00px" width="1.90" height="5.40" viewBox="0 0 4 12"><g fill="#c6c6c6"><rect x="0.8" y="0.2" width="2.6" height="2.6"/><rect x="0.8" y="4.7" width="2.6" height="2.6"/><rect x="0.8" y="9.2" width="2.6" height="2.6"/></g></svg>
<div class="a" style="left:600.10px;top:48.70px;width:423.90px;height:489.60px;background:#383838;"></div>
<div class="a" style="left:0.00px;top:371.80px;width:600.00px;height:2.10px;background:#1d1d1d;"></div>
<div class="a" style="left:0.00px;top:373.90px;width:598.90px;height:9.70px;background:#282828;"></div>
<div class="a" style="left:0.00px;top:373.90px;width:48.60px;height:9.70px;background:#3c3c3c;"></div>
<svg class="a" style="left:3.70px;top:376.30px" width="6.20" height="5.50" viewBox="0 0 14 12"><path d="M0.4 1.4 Q0.4 0.4 1.4 0.4 H5 L6.2 2 H12.6 Q13.6 2 13.6 3 V10.6 Q13.6 11.6 12.6 11.6 H1.4 Q0.4 11.6 0.4 10.6Z" fill="#cacaca"/><path d="M0.4 3.4 H13.6" stroke="#8e8e8e" stroke-width="0.7"/></svg>
<span class="t" style="left:11px;top:377px;font-size:6.2px;color:#d0d0d0;transform:translate(0.72px,0.01px) rotate(0.03deg) scaleX(0.7718);">プロジェクト</span>
<svg class="a" style="left:53.80px;top:376.10px" width="5.60" height="5.90" viewBox="0 0 11 12"><rect x="0.5" y="0.5" width="10" height="11" rx="1.2" fill="#c8c8c8"/><path d="M2.4 3H8.6M2.4 5.4H8.6M2.4 7.8H8.6" stroke="#282828" stroke-width="1.1"/><rect x="6.6" y="8.6" width="2.4" height="1.6" fill="#282828"/></svg>
<span class="t" style="left:60px;top:377px;font-size:6.2px;color:#c8c8c8;transform:translate(0.97px,0.01px) rotate(0.03deg) scaleX(0.8269);">コンソール</span>
<svg class="a" style="left:580.40px;top:375.50px" width="5.40" height="5.60" viewBox="0 0 11 12"><rect x="1.1" y="5.5" width="8.8" height="5.6" rx="1.6" fill="none" stroke="#cacaca" stroke-width="2"/><path d="M2.5 3.9 Q2.5 0.9 5.5 0.9 Q8.6 0.9 8.6 3.8 V5.4" fill="none" stroke="#cacaca" stroke-width="1.7"/></svg>
<svg class="a" style="left:591.00px;top:375.50px" width="1.90" height="5.40" viewBox="0 0 4 12"><g fill="#c6c6c6"><rect x="0.8" y="0.2" width="2.6" height="2.6"/><rect x="0.8" y="4.7" width="2.6" height="2.6"/><rect x="0.8" y="9.2" width="2.6" height="2.6"/></g></svg>
<div class="a" style="left:0.00px;top:383.60px;width:598.90px;height:10.60px;background:#3c3c3c;"></div>
<div class="a" style="left:0.00px;top:394.00px;width:598.90px;height:0.80px;background:#262626;"></div>
<svg class="a" style="left:3.70px;top:386.10px" width="6.20" height="6.20" viewBox="0 0 12 12"><path d="M6 0.2V11.8M0.2 6H11.8" stroke="#dcdcdc" stroke-width="2.1"/></svg>
<svg class="a" style="left:12.70px;top:388.10px" width="3.60" height="2.20" viewBox="0 0 10 6"><path d="M0.3 0.4 H9.7 L5 5.8Z" fill="#cfcfcf"/></svg>
<div class="a" style="left:368.70px;top:385.10px;width:160.20px;height:7.60px;background:#2b2b2b;border:0.6px solid #1f1f1f;border-radius:1.6px;"></div>
<svg class="a" style="left:370.90px;top:386.90px" width="3.90" height="3.90" viewBox="0 0 10 10"><circle cx="3.8" cy="3.8" r="2.7" fill="none" stroke="#c4c4c4" stroke-width="1.7"/><path d="M5.8 5.8 L9.4 9.4" stroke="#c4c4c4" stroke-width="1.9"/></svg>
<svg class="a" style="left:529.70px;top:385.50px" width="7.60" height="7.60" viewBox="0 0 15 15"><rect x="4.2" y="1" width="9.8" height="9.8" rx="2" fill="none" stroke="#c8c8c8" stroke-width="1.5"/><rect x="7.4" y="4.2" width="3.4" height="3.4" fill="#c8c8c8"/><circle cx="3.2" cy="11.8" r="2.2" fill="#3c3c3c" stroke="#c8c8c8" stroke-width="1.4"/></svg>
<div class="a" style="left:539.80px;top:383.90px;width:59.10px;height:10.10px;background:#424242;"></div>
<div class="a" style="left:539.50px;top:383.90px;width:0.70px;height:10.10px;background:#353535;"></div>
<div class="a" style="left:553.50px;top:383.90px;width:0.70px;height:10.10px;background:#353535;"></div>
<div class="a" style="left:567.60px;top:383.90px;width:0.70px;height:10.10px;background:#353535;"></div>
<div class="a" style="left:581.10px;top:383.90px;width:0.70px;height:10.10px;background:#353535;"></div>
<svg class="a" style="left:542.80px;top:385.20px" width="6.60" height="7.00" viewBox="0 0 13 14"><g fill="#d4d4d4"><rect x="1.6" y="0.4" width="5.4" height="4.6"/><circle cx="4" cy="10" r="3.4"/><path d="M7.6 4.6 L12.6 10.6 L10.2 11.2 L7.4 7Z"/></g></svg>
<svg class="a" style="left:556.30px;top:385.80px" width="6.60" height="6.00" viewBox="0 0 13 12"><path d="M0.6 7.4 L7.6 0.6 H11 L12.4 2 V5.4 L5.4 11.6Z" fill="#d4d4d4"/><circle cx="10" cy="3" r="1.1" fill="#3c3c3c"/><path d="M3.6 6.6 L6.2 9.2" stroke="#3c3c3c" stroke-width="0.9"/></svg>
<svg class="a" style="left:570.80px;top:386.00px" width="6.40" height="6.10" viewBox="0 0 14 13.4"><path d="M7 0.3 L9.1 4.7 L13.8 5.3 L10.3 8.5 L11.3 13.2 L7 10.8 L2.7 13.2 L3.7 8.5 L0.2 5.3 L4.9 4.7Z" fill="#8a8a8a"/></svg>
<svg class="a" style="left:583.80px;top:386.20px" width="7.40" height="5.80" viewBox="0 0 15 12"><path d="M0.8 6.4 C3 2.4 9 2.4 11.4 6.4 C9 10.4 3 10.4 0.8 6.4Z" fill="none" stroke="#c8c8c8" stroke-width="1.5"/><circle cx="6" cy="6.4" r="1.8" fill="#c8c8c8"/><path d="M1 11.2 L13.4 0.8" stroke="#c8c8c8" stroke-width="1.6"/></svg>
<span class="t" style="left:591px;top:386px;font-size:6.6px;color:#c8c8c8;-webkit-text-stroke:0.14px #c8c8c8;transform:translate(0.17px,0.57px) rotate(0.03deg) scaleX(1.3231);">8</span>
<div class="a" style="left:0.00px;top:394.80px;width:129.40px;height:143.20px;background:#383838;"></div>
<div class="a" style="left:129.40px;top:394.80px;width:1.00px;height:143.20px;background:#232323;"></div>
<div class="a" style="left:130.40px;top:394.80px;width:468.50px;height:143.20px;background:#333333;"></div>
<div class="a" style="left:130.40px;top:394.80px;width:468.50px;height:9.70px;background:#3e3e3e;"></div>
<div class="a" style="left:130.40px;top:404.40px;width:468.50px;height:0.70px;background:#2a2a2a;"></div>
<span class="t" style="left:131px;top:397px;font-size:6.6px;color:#b6b6b6;-webkit-text-stroke:0.14px #b6b6b6;transform:translate(0.90px,0.57px) rotate(0.03deg) scaleX(1.0076);">Assets</span>
<svg class="a" style="left:155.80px;top:398.30px" width="3.10" height="4.60" viewBox="0 0 6 10"><path d="M1 0.8 L5 5 L1 9.2" fill="none" stroke="#a8a8a8" stroke-width="1.3"/></svg>
<span class="t" style="left:161px;top:397px;font-size:6.6px;color:#b6b6b6;-webkit-text-stroke:0.14px #b6b6b6;transform:translate(0.32px,0.57px) rotate(0.03deg) scaleX(0.9633);">FBX</span>
<svg class="a" style="left:177.70px;top:398.30px" width="3.10" height="4.60" viewBox="0 0 6 10"><path d="M1 0.8 L5 5 L1 9.2" fill="none" stroke="#a8a8a8" stroke-width="1.3"/></svg>
<span class="t" style="left:183px;top:397px;font-size:6.6px;color:#e2e2e2;font-weight:bold;transform:translate(0.90px,0.57px) rotate(0.03deg) scaleX(1.1183);">Texture</span>
<svg class="a" style="left:139.20px;top:407.80px" width="6.40" height="5.50" viewBox="0 0 14 12"><path d="M0.4 1.4 Q0.4 0.4 1.4 0.4 H5 L6.2 2 H12.6 Q13.6 2 13.6 3 V10.6 Q13.6 11.6 12.6 11.6 H1.4 Q0.4 11.6 0.4 10.6Z" fill="#cacaca"/><path d="M0.4 3.4 H13.6" stroke="#8e8e8e" stroke-width="0.7"/></svg>
<span class="t" style="left:147px;top:408px;font-size:6.7px;color:#d2d2d2;-webkit-text-stroke:0.14px #d2d2d2;transform:translate(0.27px,0.05px) rotate(0.03deg) scaleX(1.0642);">Materials</span>
<div class="a" style="left:138.00px;top:415.00px;width:8.80px;height:7.40px;background:#050505;"></div>
<div class="a" style="left:140.7px;top:417.4px;width:3px;height:3px;border-radius:50%;background:#fcfcfc;box-shadow:0 0 1.4px 0.8px #9a9a9a"></div>
<span class="t" style="left:147px;top:416px;font-size:6.7px;color:#d2d2d2;-webkit-text-stroke:0.14px #d2d2d2;transform:translate(0.29px,0.55px) rotate(0.03deg) scaleX(1.0242);">MatCap</span>
<div class="a" style="left:138.00px;top:423.50px;width:8.80px;height:7.60px;background:#141414;"></div>
<div class="a" style="left:138.60px;top:423.50px;width:1.20px;height:1.60px;background:#e8e8e8;"></div>
<div class="a" style="left:142.60px;top:424.20px;width:1.70px;height:6.90px;background:#f0f0f0;"></div>
<div class="a" style="left:144.70px;top:424.60px;width:1.50px;height:6.50px;background:#dcdcdc;"></div>
<div class="a" style="left:140.00px;top:426.40px;width:2.20px;height:4.70px;background:#3a3a3a;"></div>
<span class="t" style="left:147px;top:424px;font-size:6.7px;color:#d2d2d2;-webkit-text-stroke:0.14px #d2d2d2;transform:translate(0.80px,1.00px) rotate(0.03deg) scaleX(0.9815);">TEX_Saw</span>
<div class="a" style="left:138.00px;top:432.00px;width:8.80px;height:7.60px;background:#9a9a9a;"></div>
<div class="a" style="left:138.00px;top:435.00px;width:4.40px;height:4.60px;background:#050505;"></div>
<div class="a" style="left:138.00px;top:432.00px;width:4.40px;height:3.00px;background:#8a8a8a;"></div>
<div class="a" style="left:142.40px;top:432.00px;width:0.50px;height:7.60px;background:#bbbbbb;"></div>
<span class="t" style="left:147px;top:433px;font-size:6.7px;color:#d2d2d2;-webkit-text-stroke:0.14px #d2d2d2;transform:translate(0.80px,0.55px) rotate(0.03deg) scaleX(0.9859);">TEX_Saw_Mask</span>
<div class="a" style="left:130.40px;top:528.20px;width:468.50px;height:9.80px;background:#414141;"></div>
<div class="a" style="left:565.00px;top:532.70px;width:25.60px;height:0.90px;background:#5e5e5e;"></div>
<div class="a" style="left:560.8px;top:530.4px;width:5.4px;height:5.4px;border-radius:50%;background:#9c9c9c"></div>
<svg class="a" style="left:2.70px;top:397.30px" width="3.80" height="4.40" viewBox="0 0 7 8"><path d="M0.3 0.2 V7.8 L6.8 4Z" fill="#7b7b7b"/></svg>
<svg class="a" style="left:9.70px;top:396.40px" width="6.30" height="5.90" viewBox="0 0 14 13.4"><path d="M7 0.3 L9.1 4.7 L13.8 5.3 L10.3 8.5 L11.3 13.2 L7 10.8 L2.7 13.2 L3.7 8.5 L0.2 5.3 L4.9 4.7Z" fill="#cacaca"/></svg>
<span class="t" style="left:18px;top:396px;font-size:6.9px;color:#e0e0e0;font-weight:bold;transform:translate(0.08px,0.85px) rotate(0.03deg) scaleX(1.0467);">Favorites</span>
<svg class="a" style="left:2.40px;top:414.20px" width="4.60" height="3.90" viewBox="0 0 8 7"><path d="M0.2 0.3 H7.8 L4 6.8Z" fill="#7b7b7b"/></svg>
<svg class="a" style="left:9.30px;top:413.10px" width="7.20" height="5.50" viewBox="0 0 15 12"><path d="M0.4 1.4 Q0.4 0.4 1.4 0.4 H4.6 L5.8 2 H10.6 Q11.6 2 11.6 3 V4.2 H3.4 L0.4 10.4Z" fill="#cacaca"/><path d="M3.8 5 H14.8 L12 11.6 H0.8 Z" fill="#cacaca"/></svg>
<span class="t" style="left:18px;top:413px;font-size:6.9px;color:#e0e0e0;font-weight:bold;transform:translate(0.35px,0.05px) rotate(0.03deg) scaleX(0.9933);">Assets</span>
<svg class="a" style="left:10.00px;top:422.90px" width="4.60" height="3.90" viewBox="0 0 8 7"><path d="M0.2 0.3 H7.8 L4 6.8Z" fill="#7b7b7b"/></svg>
<svg class="a" style="left:16.70px;top:421.60px" width="7.40" height="5.50" viewBox="0 0 15 12"><path d="M0.4 1.4 Q0.4 0.4 1.4 0.4 H4.6 L5.8 2 H10.6 Q11.6 2 11.6 3 V4.2 H3.4 L0.4 10.4Z" fill="#cacaca"/><path d="M3.8 5 H14.8 L12 11.6 H0.8 Z" fill="#cacaca"/></svg>
<span class="t" style="left:25px;top:421px;font-size:6.7px;color:#d2d2d2;-webkit-text-stroke:0.14px #d2d2d2;transform:translate(0.22px,0.65px) rotate(0.03deg) scaleX(0.9680);">FBX</span>
<div class="a" style="left:0.00px;top:428.40px;width:129.40px;height:8.20px;background:#4d4d4d;"></div>
<svg class="a" style="left:17.60px;top:430.50px" width="3.80" height="4.40" viewBox="0 0 7 8"><path d="M0.3 0.2 V7.8 L6.8 4Z" fill="#7b7b7b"/></svg>
<svg class="a" style="left:24.30px;top:430.00px" width="6.90" height="5.50" viewBox="0 0 14 12"><path d="M0.4 1.4 Q0.4 0.4 1.4 0.4 H5 L6.2 2 H12.6 Q13.6 2 13.6 3 V10.6 Q13.6 11.6 12.6 11.6 H1.4 Q0.4 11.6 0.4 10.6Z" fill="#cacaca"/><path d="M0.4 3.4 H13.6" stroke="#8e8e8e" stroke-width="0.7"/></svg>
<span class="t" style="left:33px;top:430px;font-size:6.7px;color:#d2d2d2;-webkit-text-stroke:0.14px #d2d2d2;transform:translate(0.40px,0.25px) rotate(0.03deg) scaleX(1.1034);">Texture</span>
<svg class="a" style="left:16.80px;top:438.90px" width="6.90" height="5.50" viewBox="0 0 14 12"><path d="M1 1.2 H5 L6.2 2.8 H13 V11 H1Z" fill="none" stroke="#cacaca" stroke-width="1.4"/></svg>
<span class="t" style="left:25px;top:438px;font-size:6.7px;color:#d2d2d2;-webkit-text-stroke:0.14px #d2d2d2;transform:translate(0.18px,0.85px) rotate(0.03deg) scaleX(1.0316);">Prefab</span>
<svg class="a" style="left:10.40px;top:447.60px" width="3.80" height="4.40" viewBox="0 0 7 8"><path d="M0.3 0.2 V7.8 L6.8 4Z" fill="#7b7b7b"/></svg>
<svg class="a" style="left:16.90px;top:447.30px" width="6.90" height="5.50" viewBox="0 0 14 12"><path d="M0.4 1.4 Q0.4 0.4 1.4 0.4 H5 L6.2 2 H12.6 Q13.6 2 13.6 3 V10.6 Q13.6 11.6 12.6 11.6 H1.4 Q0.4 11.6 0.4 10.6Z" fill="#cacaca"/><path d="M0.4 3.4 H13.6" stroke="#8e8e8e" stroke-width="0.7"/></svg>
<span class="t" style="left:25px;top:447px;font-size:6.7px;color:#d2d2d2;-webkit-text-stroke:0.14px #d2d2d2;transform:translate(0.45px,0.35px) rotate(0.03deg) scaleX(1.0158);">QuickOutline</span>
<svg class="a" style="left:16.90px;top:455.80px" width="6.90" height="5.50" viewBox="0 0 14 12"><path d="M0.4 1.4 Q0.4 0.4 1.4 0.4 H5 L6.2 2 H12.6 Q13.6 2 13.6 3 V10.6 Q13.6 11.6 12.6 11.6 H1.4 Q0.4 11.6 0.4 10.6Z" fill="#cacaca"/><path d="M0.4 3.4 H13.6" stroke="#8e8e8e" stroke-width="0.7"/></svg>
<span class="t" style="left:25px;top:455px;font-size:6.7px;color:#d2d2d2;-webkit-text-stroke:0.14px #d2d2d2;transform:translate(0.46px,0.75px) rotate(0.03deg) scaleX(0.9727);">Scenes</span>
<svg class="a" style="left:10.00px;top:465.50px" width="4.60" height="3.90" viewBox="0 0 8 7"><path d="M0.2 0.3 H7.8 L4 6.8Z" fill="#7b7b7b"/></svg>
<svg class="a" style="left:16.70px;top:464.30px" width="7.40" height="5.50" viewBox="0 0 15 12"><path d="M0.4 1.4 Q0.4 0.4 1.4 0.4 H4.6 L5.8 2 H10.6 Q11.6 2 11.6 3 V4.2 H3.4 L0.4 10.4Z" fill="#cacaca"/><path d="M3.8 5 H14.8 L12 11.6 H0.8 Z" fill="#cacaca"/></svg>
<span class="t" style="left:25px;top:464px;font-size:6.7px;color:#d2d2d2;-webkit-text-stroke:0.14px #d2d2d2;transform:translate(0.70px,0.45px) rotate(0.03deg) scaleX(1.0737);">Toon</span>
<svg class="a" style="left:24.30px;top:472.90px" width="6.90" height="5.50" viewBox="0 0 14 12"><path d="M0.4 1.4 Q0.4 0.4 1.4 0.4 H5 L6.2 2 H12.6 Q13.6 2 13.6 3 V10.6 Q13.6 11.6 12.6 11.6 H1.4 Q0.4 11.6 0.4 10.6Z" fill="#cacaca"/><path d="M0.4 3.4 H13.6" stroke="#8e8e8e" stroke-width="0.7"/></svg>
<span class="t" style="left:32px;top:473px;font-size:6.7px;color:#d2d2d2;-webkit-text-stroke:0.14px #d2d2d2;transform:translate(0.88px,0.05px) rotate(0.03deg) scaleX(1.0353);">Editor</span>
<svg class="a" style="left:17.60px;top:481.80px" width="3.80" height="4.40" viewBox="0 0 7 8"><path d="M0.3 0.2 V7.8 L6.8 4Z" fill="#7b7b7b"/></svg>
<svg class="a" style="left:24.30px;top:481.40px" width="6.90" height="5.50" viewBox="0 0 14 12"><path d="M0.4 1.4 Q0.4 0.4 1.4 0.4 H5 L6.2 2 H12.6 Q13.6 2 13.6 3 V10.6 Q13.6 11.6 12.6 11.6 H1.4 Q0.4 11.6 0.4 10.6Z" fill="#cacaca"/><path d="M0.4 3.4 H13.6" stroke="#8e8e8e" stroke-width="0.7"/></svg>
<span class="t" style="left:33px;top:481px;font-size:6.7px;color:#d2d2d2;-webkit-text-stroke:0.14px #d2d2d2;transform:translate(0.15px,0.55px) rotate(0.03deg) scaleX(1.0071);">Shader</span>
<svg class="a" style="left:2.70px;top:490.40px" width="3.80" height="4.40" viewBox="0 0 7 8"><path d="M0.3 0.2 V7.8 L6.8 4Z" fill="#7b7b7b"/></svg>
<svg class="a" style="left:9.40px;top:489.80px" width="6.90" height="5.50" viewBox="0 0 14 12"><path d="M0.4 1.4 Q0.4 0.4 1.4 0.4 H5 L6.2 2 H12.6 Q13.6 2 13.6 3 V10.6 Q13.6 11.6 12.6 11.6 H1.4 Q0.4 11.6 0.4 10.6Z" fill="#cacaca"/><path d="M0.4 3.4 H13.6" stroke="#8e8e8e" stroke-width="0.7"/></svg>
<span class="t" style="left:18px;top:489px;font-size:6.9px;color:#e0e0e0;font-weight:bold;transform:translate(0.08px,0.70px) rotate(0.03deg) scaleX(1.0368);">Packages</span>
<div class="a" style="left:0.00px;top:537.80px;width:1024.00px;height:12.20px;background:#191919;"></div>
<svg class="a" style="left:970.40px;top:540.60px" width="8.20" height="7.80" viewBox="0 0 16 15"><ellipse cx="8" cy="8" rx="4.3" ry="5.1" fill="#cfcfcf"/><path d="M2 3.2L5 5.8M14 3.2L11 5.8M1.2 8.2H4.2M14.8 8.2H11.8M2 13.2L5 10.6M14 13.2L11 10.6M5.6 1L7 3.6M10.4 1L9 3.6" stroke="#cfcfcf" stroke-width="1.2"/><path d="M1.4 0.6L14.8 14.6" stroke="#191919" stroke-width="2.6"/><path d="M2.2 0.8L14.4 14" stroke="#cfcfcf" stroke-width="1.1"/></svg>
<svg class="a" style="left:984.80px;top:540.60px" width="7.60" height="7.80" viewBox="0 0 15 15"><ellipse cx="7" cy="3.2" rx="5.4" ry="2.4" fill="#cfcfcf"/><path d="M1.6 5 Q7 8.4 12.4 5 V7.6 Q7 11 1.6 7.6Z M1.6 9.4 Q7 12.8 12.4 9.4 V12 Q7 15.4 1.6 12Z" fill="#cfcfcf"/><path d="M2 3.8L13.6 14.8" stroke="#191919" stroke-width="2.4"/><path d="M2.6 4.2L13.8 14.4" stroke="#cfcfcf" stroke-width="1"/></svg>
<svg class="a" style="left:998.60px;top:540.60px" width="8.20" height="7.80" viewBox="0 0 16 15"><path d="M2.4 8.6 A5.6 5.6 0 0 1 12 3.8 M13.6 6.4 A5.6 5.6 0 0 1 4 11.2" fill="none" stroke="#cfcfcf" stroke-width="1.7"/><path d="M10.4 0.8 L13.8 4.4 L9.4 5.4Z M5.6 14.2 L2.2 10.6 L6.6 9.6Z" fill="#cfcfcf"/><circle cx="8" cy="7.6" r="2" fill="#cfcfcf"/><path d="M1.6 0.8L14.6 14.4" stroke="#191919" stroke-width="2.4"/><path d="M2.2 1.2L14.4 14" stroke="#cfcfcf" stroke-width="1"/></svg>
<svg class="a" style="left:1012.30px;top:540.30px" width="8.80" height="8.40" viewBox="0 0 16 16"><circle cx="8" cy="8" r="6.8" fill="none" stroke="#a6a6a6" stroke-width="1.5"/><path d="M4.8 8.2 L7.2 10.6 L11.4 5.8" fill="none" stroke="#d0d0d0" stroke-width="1.8"/></svg>
</div>
</body>
</html>
